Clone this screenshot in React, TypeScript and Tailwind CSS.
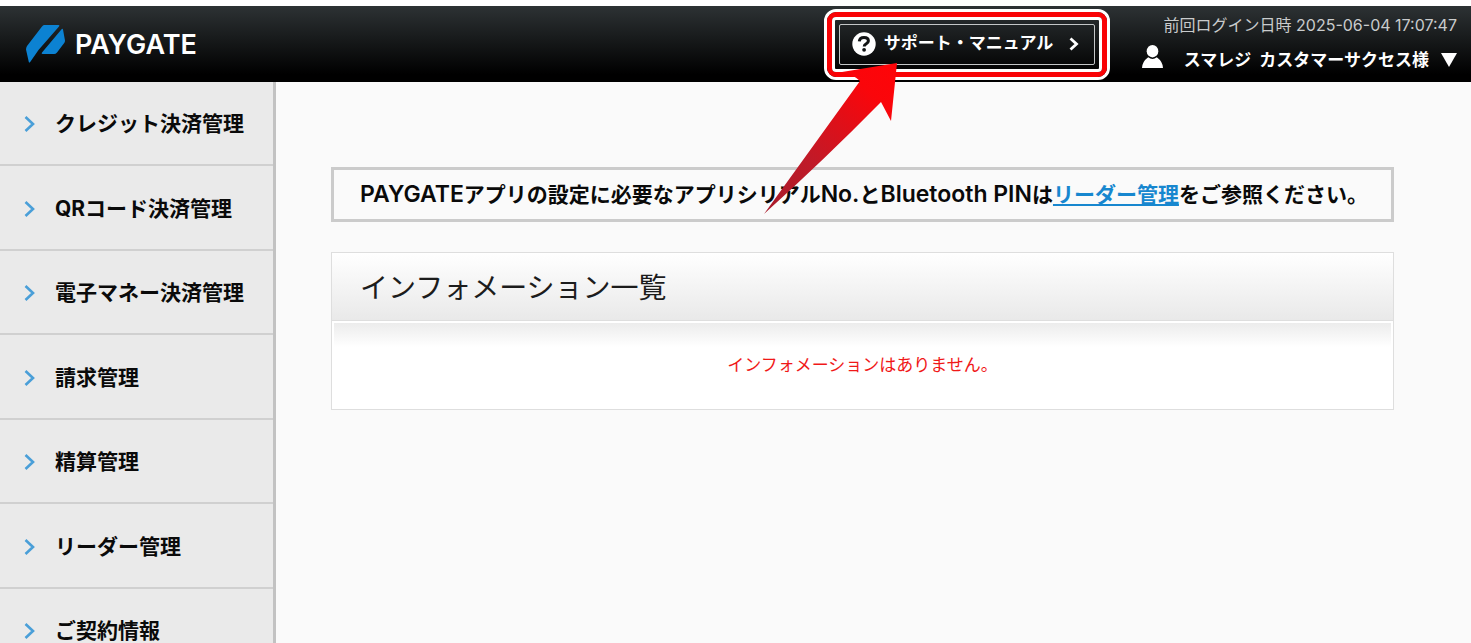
import React from "react";

const menuItems = [
  "クレジット決済管理",
  "QRコード決済管理",
  "電子マネー決済管理",
  "請求管理",
  "精算管理",
  "リーダー管理",
  "ご契約情報",
];

const Logo = () => (
  <a href="#" className="flex items-center gap-2.5 text-white">
    <svg width="39" height="38" viewBox="0 0 39 38" aria-hidden="true">
      <path
        fill="#0c82d2"
        d="M18 0H32.5Q34 .2 33 1.4L12.5 25 4.2 37Q3.2 38.2 2.8 37L0 24.5Q0 22.5 1 21L16 1.5Q17 0 18 0Z"
      />
      <path fill="#0c82d2" d="M35.8 4Q36.7 3.2 37 4.5L39 15.5Q39 17 38.2 18L31 27.5Q29.8 29 28 29H16.5Q15 28.8 16 27.6Z" />
    </svg>
    <span className="pt-0.5 text-[27px] leading-8 font-semibold">PAYGATE</span>
  </a>
);

const SupportLink = () => (
  <div className="relative">
    <a
      href="#"
      className="flex h-[41px] w-64 items-center rounded-xs border border-[#c4c6c7] pl-3 text-[17px] font-bold text-white"
    >
      <svg width="24" height="24" viewBox="0 0 24 24" className="mr-2" aria-hidden="true">
        <circle cx="12" cy="12" r="11.7" fill="#fff" />
        <path
          d="M7.3 9.4C7.6 6.6 9.7 5.6 12 5.6C14.6 5.6 16.4 7 16.4 9.1C16.4 11.9 12.2 11.6 12.2 14.4"
          fill="none"
          stroke="#111314"
          strokeWidth="3"
        />
        <circle cx="12.1" cy="17.8" r="1.9" fill="#111314" />
      </svg>
      サポート・マニュアル
      <svg width="10" height="14" viewBox="0 0 10 14" className="ml-4" aria-hidden="true">
        <path d="M1.5 1.5L7.5 7L1.5 12.5" fill="none" stroke="#fff" strokeWidth="2.8" />
      </svg>
    </a>
    <div className="pointer-events-none absolute -inset-[15px] rounded-xl border-[3px] border-white">
      <div className="h-full rounded-[9px] border-[5px] border-[#f90306]">
        <div className="h-full rounded-sm border-[3px] border-white" />
      </div>
    </div>
    {/* arrow from the notice up to the support link */}
    <svg
      width="134"
      height="151"
      viewBox="0 0 134 151"
      className="pointer-events-none absolute top-[39px] -left-[75px] z-10"
      aria-hidden="true"
    >
      <defs>
        <linearGradient id="arrow" x1="0" y1="151" x2="134" y2="0" gradientUnits="userSpaceOnUse">
          <stop offset="0" stopColor="#a81c2c" />
          <stop offset="0.35" stopColor="#c01a28" />
          <stop offset="0.8" stopColor="#fa060b" />
          <stop offset="1" stopColor="#ff0408" />
        </linearGradient>
      </defs>
      <path fill="url(#arrow)" d="M0 151L96 18Q90 12 78 9L133 0L127 58L117 39Q60 97 0 151Z" />
    </svg>
  </div>
);

const Account = () => (
  <div className="flex flex-col items-end gap-2">
    <p className="text-base leading-6 text-[#c9cbcc]">前回ログイン日時 2025-06-04 17:07:47</p>
    <button type="button" className="flex items-center text-[17px] leading-7 font-bold text-white">
      <svg width="21" height="23" viewBox="0 0 21 23" className="mr-[21px] mb-2" aria-hidden="true">
        <ellipse cx="10.5" cy="6.2" rx="5.8" ry="6.2" fill="#fff" />
        <path d="M0 23Q.2 16.5 6.2 12.2Q10.5 15.6 14.8 12.2Q20.8 16.5 21 23Z" fill="#fff" />
      </svg>
      <span>
        スマレジ <span className="ml-1">カスタマーサクセス様</span>
      </span>
      <svg width="16" height="14" viewBox="0 0 16 14" className="ml-3" aria-hidden="true">
        <path d="M0 0H16L8 14Z" fill="#fff" />
      </svg>
    </button>
  </div>
);

const Sidebar = () => (
  <nav className="w-[276px] shrink-0 border-r-[3px] border-[#c2c2c2] bg-[#eaeaea]">
    <ul>
      {menuItems.map((item) => (
        <li key={item} className="h-[84px] border-b-2 border-[#d0d0d0] even:h-[85px]">
          <a href="#" className="flex h-full items-center gap-5 pt-0.5 pl-6 text-[21px] font-bold text-[#0a0a0a]">
            <svg width="11" height="16" viewBox="0 0 11 16" aria-hidden="true">
              <path d="M1.5 1L9 8L1.5 15" fill="none" stroke="#4a9fd8" strokeWidth="2.6" />
            </svg>
            {item}
          </a>
        </li>
      ))}
    </ul>
  </nav>
);

export default function App() {
  return (
    <div className="flex h-screen flex-col overflow-hidden bg-[#fafafa] font-[Inter,'Noto_Sans_CJK_JP',sans-serif]">
      <header className="flex h-[82px] shrink-0 items-center justify-between border-t-[6px] border-white bg-linear-to-b/srgb from-[#2d3234] to-black to-90% pr-3.5 pl-[26px]">
        <Logo />
        <div className="flex items-center gap-[47px]">
          <SupportLink />
          <Account />
        </div>
      </header>
      <div className="flex flex-1">
        <Sidebar />
        <main className="min-w-0 flex-1 pt-[85px] pr-[77px] pl-[55px]">
          <p className="border-[3px] border-[#cbcbcb] px-[26px] py-2.5 text-[21px] leading-[29px] font-semibold whitespace-nowrap text-[#0a0a0a]">
            <span className="text-[23px]">PAYGATE</span>アプリの設定に必要なアプリシリアル
            <span className="text-[23px]">No.</span>と<span className="text-[23px]">Bluetooth PIN</span>は
            <a href="#" className="text-[#1787cf] underline">
              リーダー管理
            </a>
            をご参照ください。
          </p>
          <section className="mt-[30px] border border-[#dedede] bg-white">
            <h1 className="border-b border-[#dedede] bg-linear-to-b from-white to-[#e9e9e9] px-7 pt-[15px] pb-3 text-[28px] leading-10 text-[#1c1c1c]">
              インフォメーション一覧
            </h1>
            <div className="mx-0.5 mt-0.5 bg-linear-to-b from-[#ececec] to-white to-[24px] pt-7 pb-[30px]">
              <p className="text-center text-[17px] leading-7 text-[#f01818]">インフォメーションはありません。</p>
            </div>
          </section>
        </main>
      </div>
    </div>
  );
}
